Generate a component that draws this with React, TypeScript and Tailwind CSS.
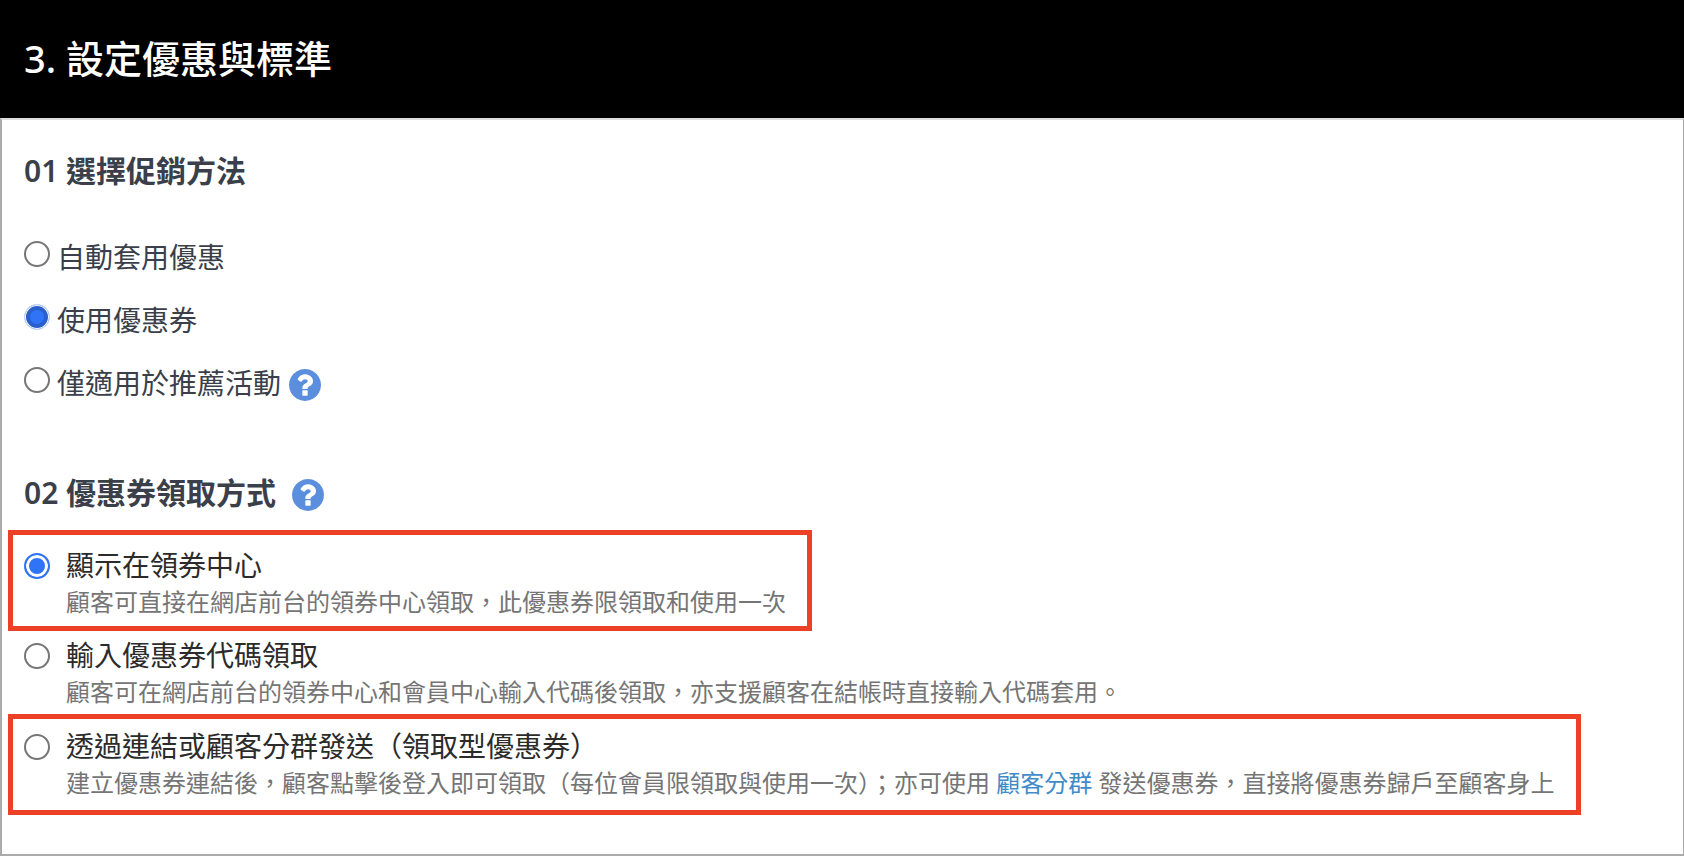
import { useState } from "react";
import type { ReactNode } from "react";
import clsx from "clsx";

const radioBase =
  "size-[26px] shrink-0 cursor-pointer appearance-none rounded-full border-2 border-[#767676] bg-white";

const methods = [
  { value: "auto", label: "自動套用優惠" },
  { value: "coupon", label: "使用優惠券" },
  { value: "referral", label: "僅適用於推薦活動", help: true },
];

type Claim = {
  value: string;
  label: string;
  desc: ReactNode;
  box: string;
};

const claims: Claim[] = [
  {
    value: "center",
    label: "顯示在領券中心",
    desc: "顧客可直接在網店前台的領券中心領取，此優惠券限領取和使用一次",
    box: "border-[#ec4126] border-5 pt-3 pb-[5px]",
  },
  {
    value: "code",
    label: "輸入優惠券代碼領取",
    desc: "顧客可在網店前台的領券中心和會員中心輸入代碼後領取，亦支援顧客在結帳時直接輸入代碼套用。",
    box: "border-transparent border-x-5 pt-[6px] pb-[3px]",
  },
  {
    value: "link",
    label: "透過連結或顧客分群發送（領取型優惠券）",
    desc: (
      <>
        建立優惠券連結後，顧客點擊後登入即可領取（每位會員限領取與使用一次）；亦可使用{" "}
        <a href="#segments" className="text-[#428bca]">
          顧客分群
        </a>{" "}
        發送優惠券，直接將優惠券歸戶至顧客身上
      </>
    ),
    box: "border-[#ec4126] border-5 pt-[9px] pb-2",
  },
];

function Help() {
  return (
    <button type="button" aria-label="說明" className="shrink-0 cursor-pointer pt-1">
      <svg viewBox="0 128 1536 1536" className="size-8 fill-[#5b8edd]">
        <path d="M896 1376v-192q0-14-9-23t-23-9h-192q-14 0-23 9t-9 23v192q0 14 9 23t23 9h192q14 0 23-9t9-23zm256-672q0-88-55.5-163t-138.5-116-170-41q-243 0-371 213-15 24 8 42l132 100q7 6 19 6 16 0 25-12 53-68 86-92 34-24 86-24 48 0 85.5 26t37.5 59q0 38-20 61t-68 45q-63 28-115.5 86.5t-52.5 125.5v36q0 14 9 23t23 9h192q14 0 23-9t9-23q0-19 21.5-49.5t54.5-49.5q32-18 49-28.5t46-35 44.5-48 28-60.5 12.5-81zm384 192q0 209-103 385.5t-279.5 279.5-385.5 103-385.5-103-279.5-279.5-103-385.5 103-385.5 279.5-279.5 385.5-103 385.5 103 279.5 279.5 103 385.5z" />
      </svg>
    </button>
  );
}

export default function App() {
  const [method, setMethod] = useState("coupon");
  const [claim, setClaim] = useState("center");

  return (
    <main
      lang="zh-Hant"
      className="flex min-h-screen flex-col bg-white font-['Noto_Sans','Noto_Sans_CJK_TC',sans-serif] text-[#3a3f4a]"
    >
      <header className="bg-black px-6 pt-8 pb-[34px]">
        <h1 className="text-[38px] leading-[52px] font-medium text-white">
          3. 設定優惠與標準
        </h1>
      </header>

      <div className="flex-1 border-2 border-r border-[#aaaaaa] border-t-[#dddddd] pt-[31px] pb-9">
        <section className="px-[22px]">
          <h2 className="text-[30px] leading-10 font-semibold">01 選擇促銷方法</h2>
          <div className="mt-[34px]">
            {methods.map((m) => (
              <div key={m.value} className="flex h-[63px] items-center gap-2">
                <label className="flex cursor-pointer items-start gap-[7px] text-[28px] leading-8">
                  <input
                    type="radio"
                    name="method"
                    value={m.value}
                    checked={method === m.value}
                    onChange={() => setMethod(m.value)}
                    className={clsx(
                      radioBase,
                      "checked:border checked:border-[#c9d9fa] checked:bg-[#2f74f7] checked:shadow-[inset_0_0_0_1px_#fff,inset_0_0_0_5px_#2a60cc]",
                    )}
                  />
                  {m.label}
                </label>
                {m.help && <Help />}
              </div>
            ))}
          </div>
        </section>

        <section className="mt-[59px]">
          <div className="flex items-center gap-4 px-[22px]">
            <h2 className="text-[30px] leading-10 font-semibold">02 優惠券領取方式</h2>
            <Help />
          </div>
          <div className="mt-[17px] flex flex-col items-start pl-[6px]">
            {claims.map((c) => (
              <label
                key={c.value}
                className={clsx("flex cursor-pointer items-start gap-4 pr-[21px] pl-[11px]", c.box)}
              >
                <input
                  type="radio"
                  name="claim"
                  value={c.value}
                  checked={claim === c.value}
                  onChange={() => setClaim(c.value)}
                  className={clsx(
                    radioBase,
                    "mt-[6px] checked:border-[#2f74f7] checked:bg-[#2f74f7] checked:shadow-[inset_0_0_0_3px_#fff]",
                  )}
                />
                <span>
                  <span className="block text-[28px] leading-9 text-[#2b2b2b]">
                    {c.label}
                  </span>
                  <span className="block text-2xl leading-[38px] text-[#757575]">{c.desc}</span>
                </span>
              </label>
            ))}
          </div>
        </section>
      </div>
    </main>
  );
}
